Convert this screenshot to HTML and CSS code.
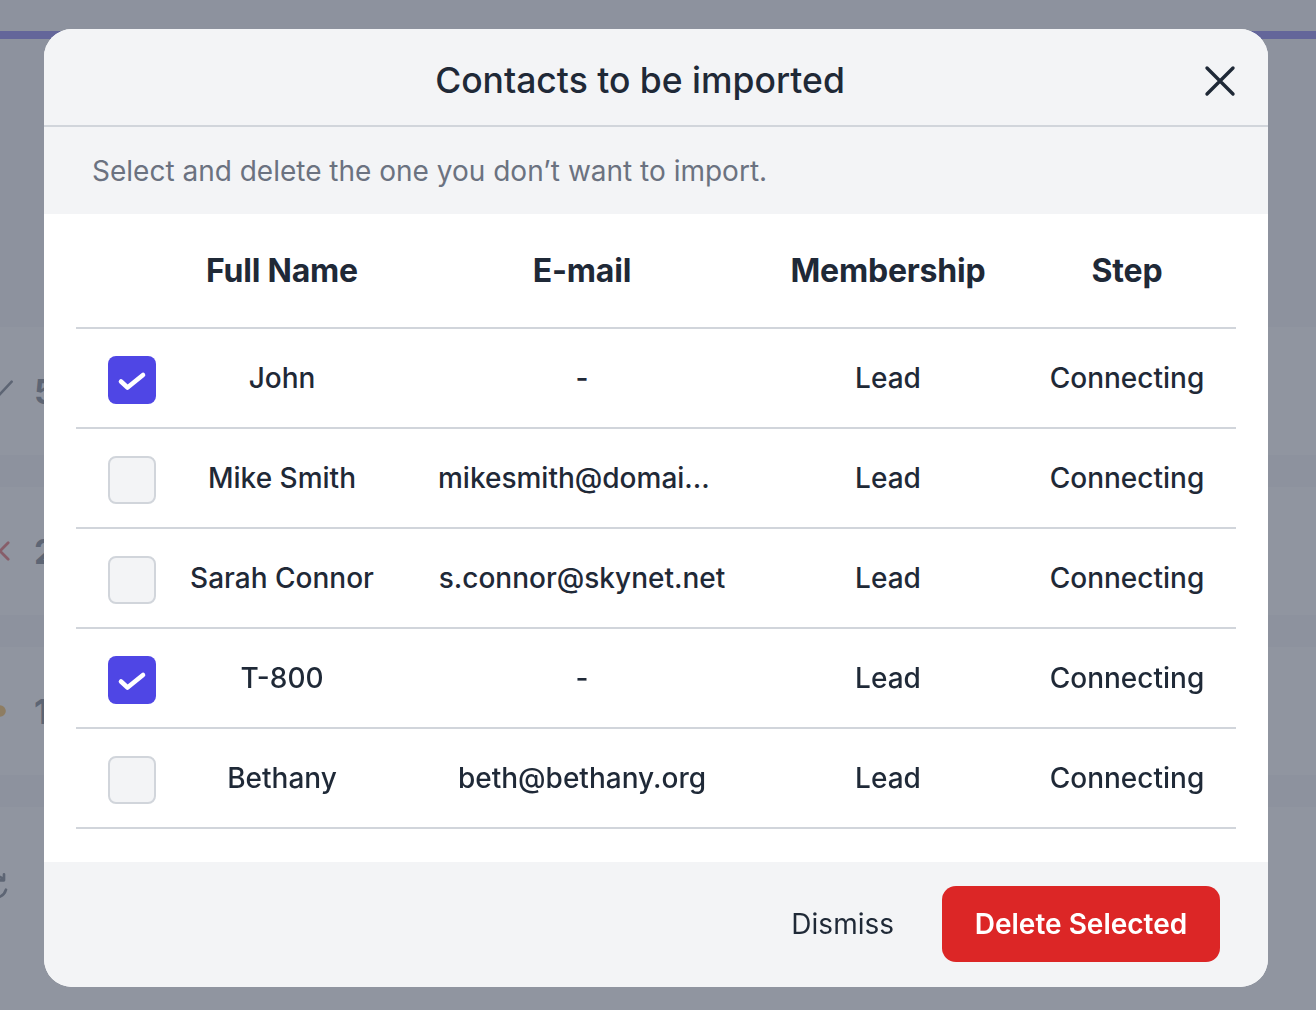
FILE: index.html
```html
<!DOCTYPE html>
<html lang="en">
<head>
<meta charset="utf-8">
<title>Contacts to be imported</title>
<link rel="stylesheet" href="styles.css">
</head>
<body>
  <!-- page behind the dialog -->
  <div class="page">
    <div class="page-top"></div>
    <div class="card">
      <div class="card-head"></div>
      <div class="stat-row">
        <svg class="stat-icon" viewBox="0 0 24 24" width="28" height="28"><path d="M4 13l5 5L22 4" fill="none" stroke="#374151" stroke-width="2.2" stroke-linecap="round"/></svg>
        <span class="stat-num">5</span>
      </div>
      <div class="stat-gap"></div>
      <div class="stat-row">
        <svg class="stat-icon" viewBox="0 0 24 24" width="28" height="28"><path d="M5 5l14 14M19 5L5 19" fill="none" stroke="#dc2626" stroke-width="2.4" stroke-linecap="round"/></svg>
        <span class="stat-num">2</span>
      </div>
      <div class="stat-gap"></div>
      <div class="stat-row">
        <svg class="stat-icon" viewBox="0 0 24 24" width="28" height="28"><circle cx="12" cy="12" r="5" fill="#f59e0b"/></svg>
        <span class="stat-num">1</span>
      </div>
      <div class="stat-gap"></div>
      <div class="stat-row stat-last">
        <svg class="stat-icon" viewBox="0 0 24 24" width="32" height="32"><path d="M19.5 14a8 8 0 1 1-1.8-7.5M18 2.5v4.5h-4.5" fill="none" stroke="#374151" stroke-width="2" stroke-linecap="round" stroke-linejoin="round"/></svg>
      </div>
    </div>
  </div>

  <div class="overlay">
    <div class="modal">
      <div class="modal-head">
        <h1 class="modal-title">Contacts to be imported</h1>
        <button class="close-btn" aria-label="Close">
          <svg viewBox="0 0 32 32" width="32" height="32"><path d="M3 3l26 26M29 3L3 29" fill="none" stroke="#1f2937" stroke-width="3.4" stroke-linecap="round"/></svg>
        </button>
      </div>
      <p class="modal-sub">Select and delete the one you don’t want to import.</p>

      <div class="modal-body">
        <div class="table">
          <div class="tr th">
            <div class="cell"></div>
            <div class="cell">Full Name</div>
            <div class="cell">E-mail</div>
            <div class="cell">Membership</div>
            <div class="cell step">Step</div>
          </div>

          <div class="tr">
            <div class="cell"><span class="check on"><svg viewBox="0 0 32 32" width="32" height="32"><path d="M5 17.5l6.5 6L27 11" fill="none" stroke="#fff" stroke-width="4.6" stroke-linecap="round" stroke-linejoin="round"/></svg></span></div>
            <div class="cell">John</div>
            <div class="cell">-</div>
            <div class="cell">Lead</div>
            <div class="cell step">Connecting</div>
          </div>

          <div class="tr">
            <div class="cell"><span class="check"></span></div>
            <div class="cell">Mike Smith</div>
            <div class="cell"><span class="trunc">mikesmith@domai...</span></div>
            <div class="cell">Lead</div>
            <div class="cell step">Connecting</div>
          </div>

          <div class="tr">
            <div class="cell"><span class="check"></span></div>
            <div class="cell">Sarah Connor</div>
            <div class="cell">s.connor@skynet.net</div>
            <div class="cell">Lead</div>
            <div class="cell step">Connecting</div>
          </div>

          <div class="tr">
            <div class="cell"><span class="check on"><svg viewBox="0 0 32 32" width="32" height="32"><path d="M5 17.5l6.5 6L27 11" fill="none" stroke="#fff" stroke-width="4.6" stroke-linecap="round" stroke-linejoin="round"/></svg></span></div>
            <div class="cell">T-800</div>
            <div class="cell">-</div>
            <div class="cell">Lead</div>
            <div class="cell step">Connecting</div>
          </div>

          <div class="tr">
            <div class="cell"><span class="check"></span></div>
            <div class="cell">Bethany</div>
            <div class="cell">beth@bethany.org</div>
            <div class="cell">Lead</div>
            <div class="cell step">Connecting</div>
          </div>
        </div>
      </div>

      <div class="modal-foot">
        <button class="btn-dismiss">Dismiss</button>
        <button class="btn-delete">Delete Selected</button>
      </div>
    </div>
  </div>
</body>
</html>
```
FILE: styles.css
```css
* { box-sizing: border-box; }

html, body {
  margin: 0;
  padding: 0;
}

body {
  width: 1316px;
  height: 1010px;
  overflow: hidden;
  background: #f3f4f6;
  font-family: Inter, "Noto Sans", sans-serif;
  color: #1f2937;
}

/* ---------- background page ---------- */
.page-top { height: 31px; }

.card {
  border-top: 8px solid #4f46e5;
  background: #f3f4f6;
}

.card-head { height: 288px; }

.stat-row {
  height: 128px;
  background: #fff;
  display: flex;
  align-items: center;
  gap: 20px;
  margin-left: -14px;
}

.stat-last { height: 220px; align-items: flex-start; padding-top: 64px; margin-left: -20px; }

.stat-gap { height: 32px; }

.stat-icon { flex: none; }

.stat-num {
  font-size: 34px;
  font-weight: 700;
  color: #374151;
}

/* ---------- dialog ---------- */
.overlay {
  position: fixed;
  inset: 0;
  background: rgba(107, 114, 128, 0.75);
  padding: 29px 0 0 44px;
}

.modal {
  width: 1224px;
  height: 958px;
  border-radius: 28px;
  overflow: hidden;
  background: #fff;
  display: flex;
  flex-direction: column;
}

.modal-head {
  height: 98px;
  flex: none;
  display: flex;
  align-items: center;
  padding: 7px 32px 0;
  background: #f3f4f6;
  border-bottom: 2px solid #d1d5db;
}

.modal-title {
  flex: 1;
  margin: 0;
  text-align: center;
  font-size: 35.5px;
  font-weight: 500;
  color: #1f2937;
}

.close-btn {
  width: 32px;
  height: 32px;
  padding: 0;
  border: 0;
  background: none;
  display: flex;
}

.modal-sub {
  margin: 0;
  height: 87px;
  flex: none;
  display: flex;
  align-items: center;
  padding: 0 48px;
  background: #f3f4f6;
  font-size: 28px;
  color: #6b7280;
}

.modal-body {
  flex: 1;
  padding: 0 32px;
  background: #fff;
}

.tr {
  display: grid;
  grid-template-columns: 112px 188px 412px 200px 248px;
  height: 100px;
  border-bottom: 2px solid #d1d5db;
  align-items: center;
  font-size: 28px;
  font-weight: 500;
  color: #1f2937;
}

.tr.th {
  height: 115px;
  font-size: 32px;
  font-weight: 700;
  letter-spacing: -0.2px;
  color: #1f2937;
}

.cell {
  display: flex;
  justify-content: center;
  align-items: center;
  min-width: 0;
  white-space: nowrap;
}

.cell.step { padding-left: 30px; }

/* shortened address sits flush-left in the column's text box */
.trunc {
  display: block;
  width: 288px;
  text-align: left;
}

.check {
  width: 48px;
  height: 48px;
  margin-top: 4px;
  border-radius: 8px;
  border: 2px solid #d1d5db;
  background: #f3f4f6;
  display: flex;
  align-items: center;
  justify-content: center;
}

.check.on {
  border: 0;
  background: #4f46e5;
}

.modal-foot {
  height: 125px;
  flex: none;
  display: flex;
  justify-content: flex-end;
  align-items: center;
  gap: 24px;
  padding: 0 48px 2px 0;
  background: #f3f4f6;
}

.btn-dismiss {
  border: 0;
  background: none;
  padding: 0 24px;
  font-family: inherit;
  font-size: 28px;
  color: #1f2937;
}

.btn-delete {
  width: 278px;
  height: 76px;
  padding: 0;
  border: 0;
  border-radius: 14px;
  background: #dc2626;
  color: #fff;
  font-family: inherit;
  font-size: 28px;
  font-weight: 600;
}
```
